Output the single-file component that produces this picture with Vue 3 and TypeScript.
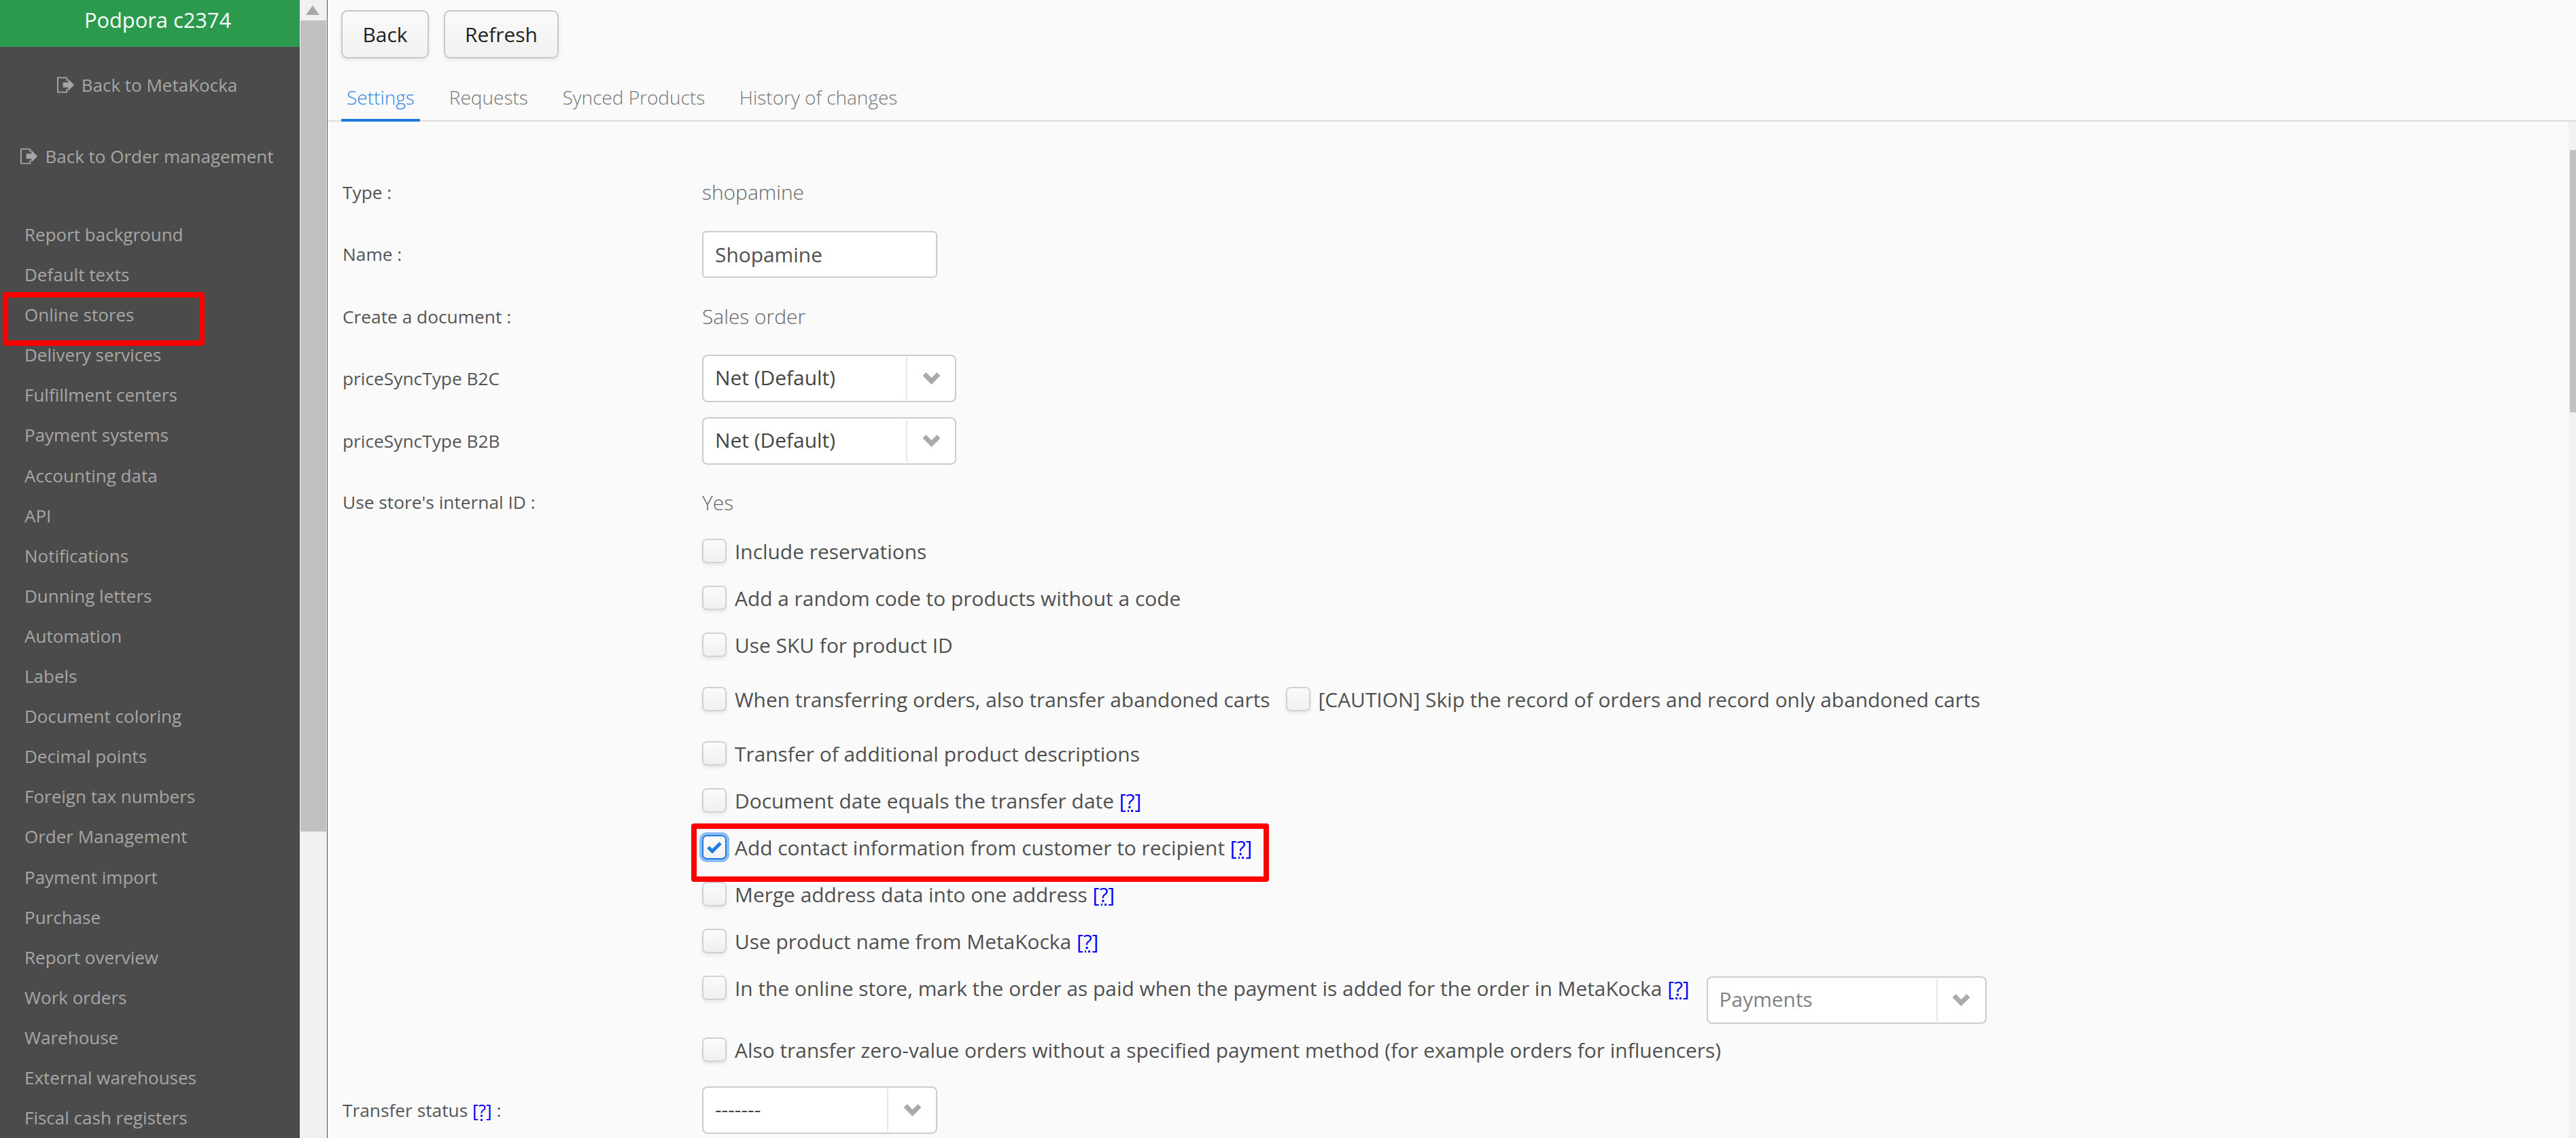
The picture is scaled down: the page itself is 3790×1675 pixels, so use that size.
<script setup lang="ts">
const menu: string[] = [
  'Report background', 'Default texts', 'Online stores', 'Delivery services', 'Fulfillment centers',
  'Payment systems', 'Accounting data', 'API', 'Notifications', 'Dunning letters', 'Automation', 'Labels',
  'Document coloring', 'Decimal points', 'Foreign tax numbers', 'Order Management', 'Payment import',
  'Purchase', 'Report overview', 'Work orders', 'Warehouse', 'External warehouses', 'Fiscal cash registers'
]
const tabs: string[] = ['Requests', 'Synced Products', 'History of changes']
</script>

<template>
  <div class="app">
    <aside class="side">
      <div class="brand">Podpora c2374</div>
      <a class="back first">
        <svg class="exit" viewBox="0 0 27 24"><path d="M15 1H1v22h15M15 1v5M15 18v5" fill="none" stroke="currentColor" stroke-width="2"/><path d="M9 8h8V3l9 9-9 9v-5H9z" fill="currentColor"/></svg>
        Back to MetaKocka
      </a>
      <a class="back second">
        <svg class="exit" viewBox="0 0 27 24"><path d="M15 1H1v22h15M15 1v5M15 18v5" fill="none" stroke="currentColor" stroke-width="2"/><path d="M9 8h8V3l9 9-9 9v-5H9z" fill="currentColor"/></svg>
        Back to Order management
      </a>
      <nav class="menu">
        <a v-for="m in menu" :key="m" class="item">{{ m }}</a>
      </nav>
      <div class="mark mark-menu"></div>
    </aside>

    <div class="sbar">
      <svg class="sarrow" viewBox="0 0 20 14"><path d="M10 0l10 14H0z" fill="#a8a8a8"/></svg>
      <div class="sthumb"></div>
    </div>

    <main class="main">
      <div class="actions">
        <button class="btn back-btn">Back</button>
        <button class="btn refresh-btn">Refresh</button>
      </div>
      <div class="tabs">
        <a class="tab active">Settings</a>
        <a v-for="t in tabs" :key="t" class="tab">{{ t }}</a>
      </div>

      <div class="below">
        <div class="form">
          <div class="row"><label class="lab">Type :</label><span class="val">shopamine</span></div>
          <div class="row"><label class="lab">Name :</label><div class="input">Shopamine</div></div>
          <div class="row"><label class="lab">Create a document :</label><span class="val">Sales order</span></div>
          <div class="row"><label class="lab">priceSyncType B2C</label>
            <div class="select w374"><span class="sel-text">Net (Default)</span><span class="sel-arrow"><svg viewBox="0 0 26 18"><path d="M0 5l5-5 8 8 8-8 5 5-13 13z" fill="#aaa"/></svg></span></div>
          </div>
          <div class="row"><label class="lab">priceSyncType B2B</label>
            <div class="select w374"><span class="sel-text">Net (Default)</span><span class="sel-arrow"><svg viewBox="0 0 26 18"><path d="M0 5l5-5 8 8 8-8 5 5-13 13z" fill="#aaa"/></svg></span></div>
          </div>
          <div class="row row-short"><label class="lab">Use store's internal ID :</label><span class="val">Yes</span></div>

          <div class="checks">
            <div class="chk"><i class="box"></i>Include reservations</div>
            <div class="chk"><i class="box"></i>Add a random code to products without a code</div>
            <div class="chk"><i class="box"></i>Use SKU for product ID</div>
            <div class="chk tall"><i class="box"></i>When transferring orders, also transfer abandoned carts<i class="box box-next"></i>[CAUTION] Skip the record of orders and record only abandoned carts</div>
            <div class="chk tall"><i class="box"></i>Transfer of additional product descriptions</div>
            <div class="chk"><i class="box"></i>Document date equals the transfer date <a class="help">[?]</a></div>
            <div class="chk marked">
              <i class="box checked"><svg viewBox="0 0 22 18"><path d="M2 9l6 6L20 3" fill="none" stroke="#1e7ae0" stroke-width="5"/></svg></i>Add contact information from customer to recipient <a class="help">[?]</a>
              <div class="mark mark-check"></div>
            </div>
            <div class="chk"><i class="box"></i>Merge address data into one address <a class="help">[?]</a></div>
            <div class="chk"><i class="box"></i>Use product name from MetaKocka <a class="help">[?]</a></div>
            <div class="chk pay">
              <i class="box"></i>In the online store, mark the order as paid when the payment is added for the order in MetaKocka <a class="help">[?]</a>
              <div class="select w412"><span class="sel-text ph">Payments</span><span class="sel-arrow"><svg viewBox="0 0 26 18"><path d="M0 5l5-5 8 8 8-8 5 5-13 13z" fill="#aaa"/></svg></span></div>
            </div>
            <div class="chk after-pay"><i class="box"></i>Also transfer zero-value orders without a specified payment method (for example orders for influencers)</div>
          </div>

          <div class="row row-last"><label class="lab">Transfer status <a class="help">[?]</a> :</label>
            <div class="select w346"><span class="sel-text">-------</span><span class="sel-arrow"><svg viewBox="0 0 26 18"><path d="M0 5l5-5 8 8 8-8 5 5-13 13z" fill="#aaa"/></svg></span></div>
          </div>
        </div>
        <div class="cbar"><div class="cthumb"></div></div>
      </div>
    </main>
  </div>
</template>

<style>
html, body { margin: 0; padding: 0; overflow: hidden; background: #fafafa; }
</style>

<style scoped>
.app {
  display: flex;
  width: 3790px;
  height: 1675px;
  overflow: hidden;
  font-family: "Open Sans", "Noto Sans", sans-serif;
  font-size: 29.9px;
  color: #505050;
  background: #fafafa;
}
.side {
  position: relative;
  flex: 0 0 441px;
  background: #4b4b4b;
  color: #a6a6a6;
  font-size: 26px;
}
.brand {
  height: 69px;
  background: #2b9a4f;
  color: #fff;
  text-align: center;
  font-size: 30.8px;
  line-height: 59px;
  padding-left: 23px;
}
.back { display: flex; justify-content: center; align-items: center; gap: 10px; color: #a6a6a6; height: 105px; padding-right: 8px; }
.back.first { margin-top: 3px; }
.exit { width: 26px; height: 24px; flex: none; }
.menu { display: flex; flex-direction: column; margin-top: 34px; }
.item { height: 59.1px; line-height: 59.1px; padding-left: 36px; white-space: nowrap; }
.mark { position: absolute; border: 8px solid #f00; border-radius: 4px; box-sizing: border-box; pointer-events: none; }
.mark-menu { left: 4px; top: 430px; width: 297px; height: 79px; }
.sbar { position: relative; flex: 0 0 40px; background: #f1f1f1; border-right: 1px solid #555; }
.sarrow { position: absolute; left: 9px; top: 8px; width: 20px; height: 14px; }
.sthumb { position: absolute; left: 1px; top: 30px; width: 38px; height: 1194px; background: #c1c1c1; }
.main { flex: 1; min-width: 0; display: flex; flex-direction: column; background: #fafafa; }
.actions { display: flex; gap: 22px; padding: 15px 0 0 20px; height: 71px; }
.btn {
  height: 71px;
  padding: 0;
  font: inherit;
  color: #222;
  background: linear-gradient(#fafafa, #f1f1f1);
  border: 2px solid #c8c8c8;
  border-radius: 9px;
  box-shadow: 0 3px 6px rgba(0, 0, 0, .08);
}
.back-btn { width: 129px; }
.refresh-btn { width: 169px; }
.tabs { display: flex; height: 93px; box-sizing: border-box; padding-left: 20px; border-bottom: 2px solid #ddd; font-size: 28px; }
.tab { display: block; padding: 21px 8px 0; margin-right: 34.5px; line-height: 72px; font-weight: 300; color: #777; white-space: nowrap; }
.tab.active { color: #2e86e6; border-bottom: 4px solid #1e7ae0; margin-bottom: -2px; margin-right: 35px; }
.below { flex: 1; min-height: 0; display: flex; }
.form { flex: 1; padding: 58px 0 0 22px; min-width: 0; }
.row { display: flex; align-items: center; height: 91.5px; }
.row-short { height: 75px; margin-top: 7px; }
.row-last { margin-top: 9px; }
.lab { flex: 0 0 529px; font-size: 26.3px; color: #555; }
.val { font-weight: 300; color: #666; }
.input {
  box-sizing: border-box; width: 346px; height: 69px; padding-left: 17px; line-height: 65px;
  background: #fff; border: 2px solid #ccc; border-radius: 6px;
}
.select {
  display: flex; box-sizing: border-box; height: 70px; background: #fff; color: #444;
  border: 2px solid #ccc; border-radius: 8px; flex: none;
}
.w374 { width: 374px; }
.w412 { width: 412px; margin: 36px 0 0 25px; }
.w346 { width: 346px; }
.sel-text { flex: 1; padding-left: 17px; line-height: 64px; }
.sel-text.ph { color: #808080; }
.sel-arrow { flex: 0 0 70px; display: flex; align-items: center; justify-content: center; border-left: 2px solid #e6e6e6; margin: 2px 0; }
.sel-arrow svg { width: 27px; height: 18px; }
.checks { padding-left: 529px; }
.chk { position: relative; display: flex; align-items: center; height: 69px; white-space: pre-wrap; }
.chk.tall { margin-top: 11px; }
.chk.after-pay { margin-top: 22px; }
.box {
  flex: none; box-sizing: border-box; width: 36px; height: 36px; margin-right: 12px;
  background: linear-gradient(#fbfbfb, #f0f0f0); border: 2px solid #d2d2d2; border-radius: 7px;
  box-shadow: 0 3px 5px rgba(0, 0, 0, .08); display: flex; align-items: center; justify-content: center;
}
.box-next { margin-left: 23px; }
.checked { border-color: #1e7ae0; box-shadow: 0 0 0 4px #8bbdf2; }
.checked svg { width: 22px; height: 18px; }
.help { color: #00f; text-decoration: underline dotted; text-underline-offset: 3px; }
.mark-check { left: -16px; top: -1px; width: 850px; height: 86px; }
.cbar { position: relative; flex: 0 0 11px; background: #f1f1f1; }
.cthumb { position: absolute; left: 2px; right: 0; top: 42px; height: 386px; background: #c1c1c1; }
</style>
